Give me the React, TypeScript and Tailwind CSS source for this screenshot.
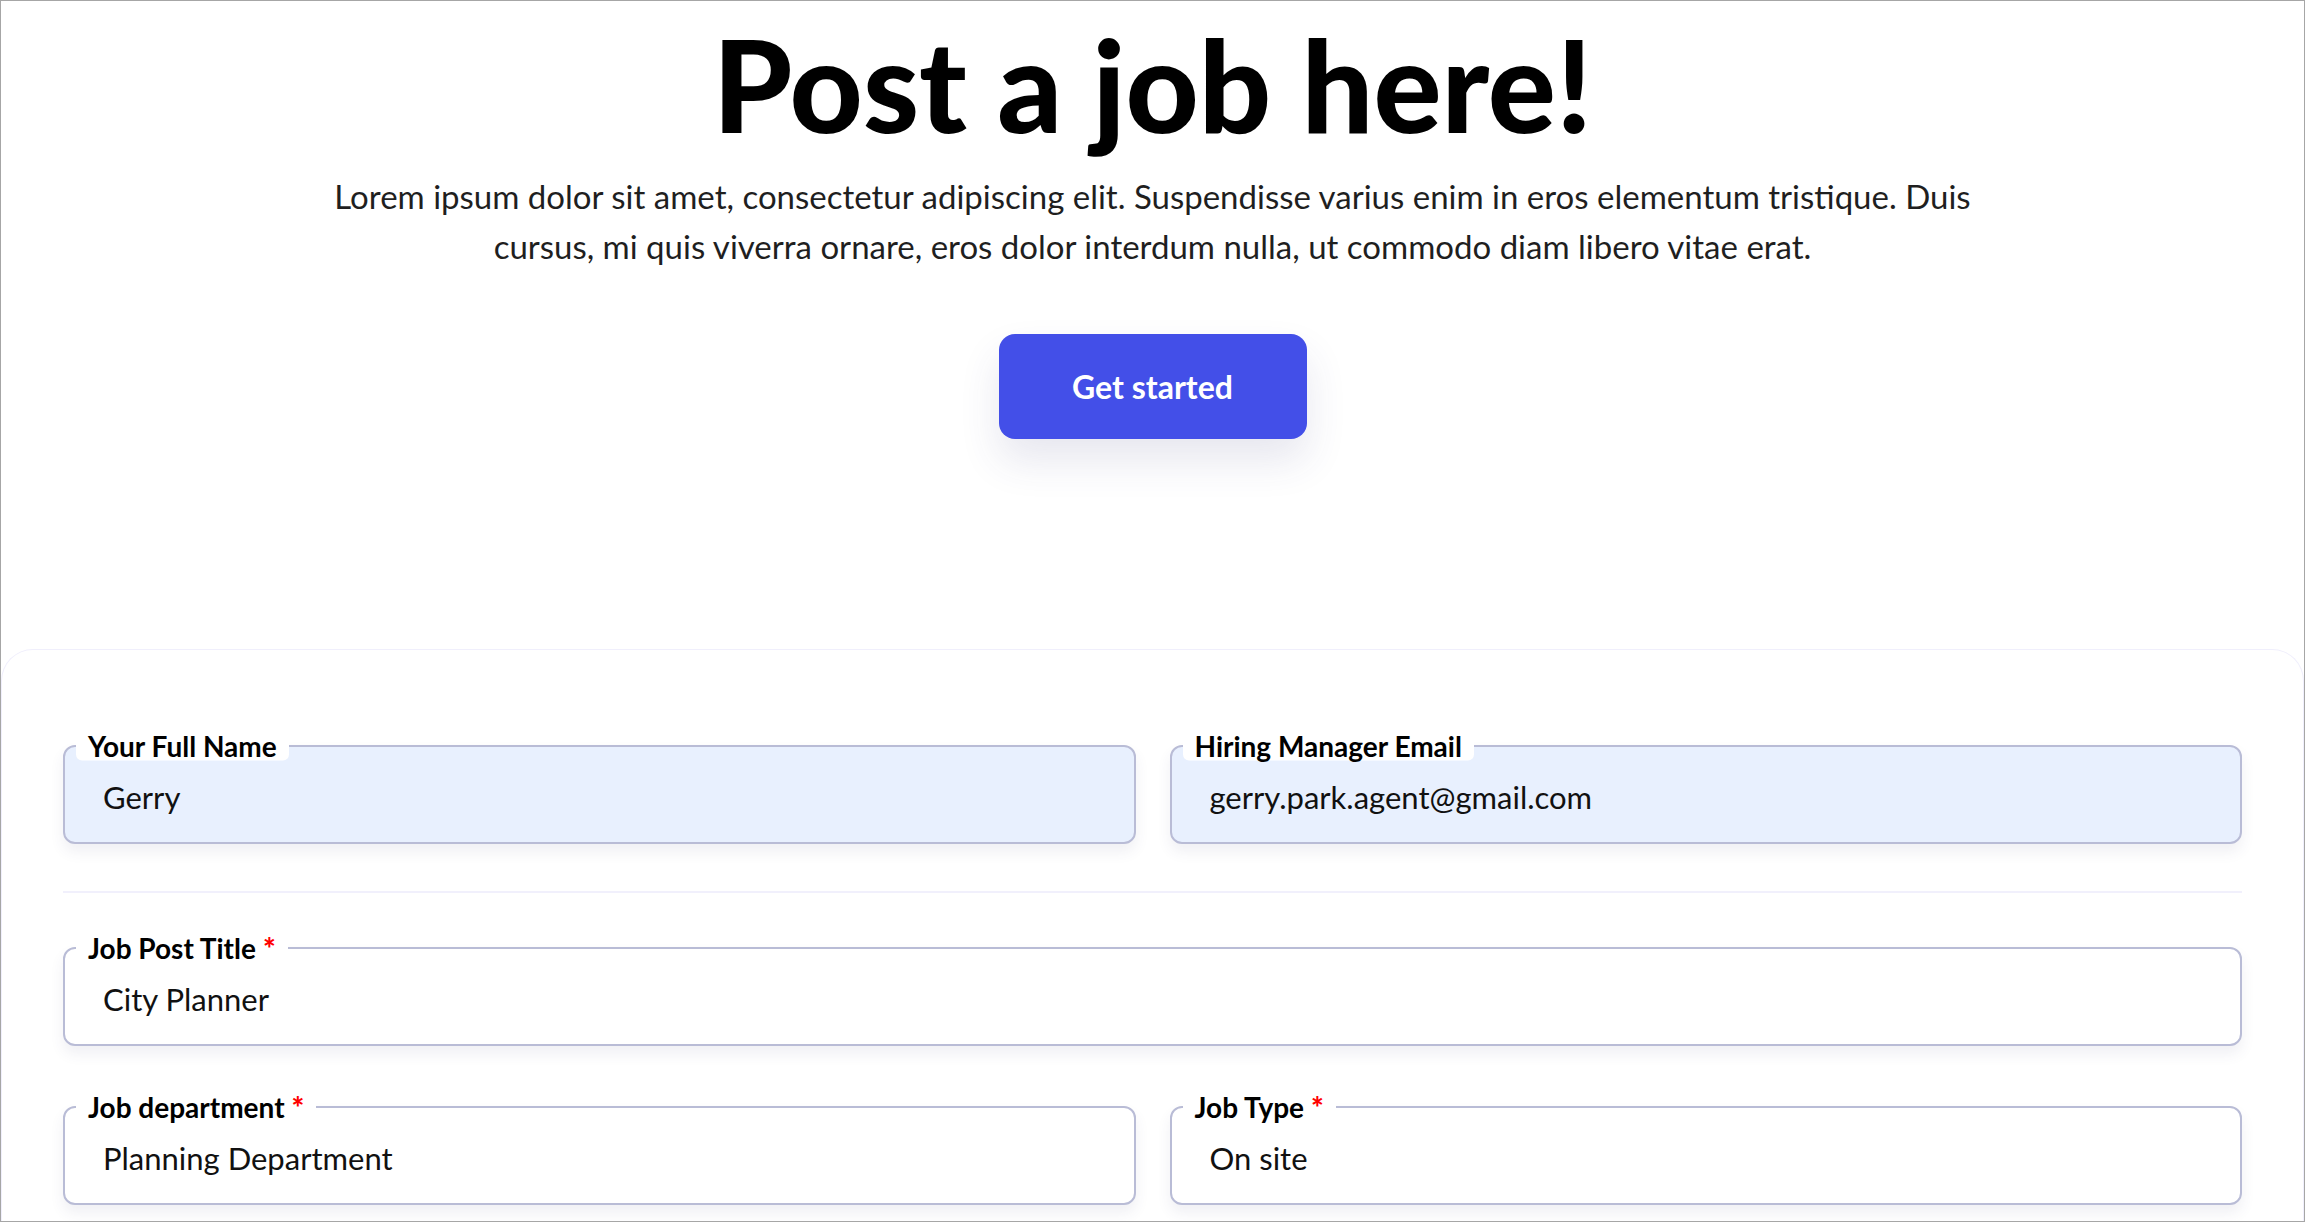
type FieldProps = {
  label: string;
  value: string;
  required?: boolean;
  filled?: boolean;
};

function Field({ label, value, required, filled }: FieldProps) {
  return (
    <div
      className={`relative flex h-[99px] items-center rounded-[12px] border-2 border-[#b9bcd6] pl-[38px] pt-[6px] text-[31px] text-[#111] shadow-[0_8px_14px_rgba(70,70,110,0.08)] ${
        filled ? "bg-[#e8f0fe]" : "bg-white"
      }`}
    >
      <span className="absolute left-[11px] top-0 -translate-y-[55%] rounded-[6px] bg-white px-[12px] text-[28px] font-bold leading-[30px] text-black">
        {label}
        {required && <span className="relative top-[1px] ml-[7px] text-[30px] font-black text-[#ff0000]">*</span>}
      </span>
      {value}
    </div>
  );
}

export default function App() {
  return (
    <div className="bg-white font-['Lato','Noto_Sans',sans-serif]">
      <div className="flex h-[1222px] flex-col overflow-hidden border border-[#a6a6a6]">
        <div className="flex flex-col items-center text-center">
          <h1 className="mt-[18px] text-[127px] font-black leading-[130px] text-black">
            Post a job here!
          </h1>
          <p className="mt-[22px] max-w-[1660px] text-[33px] leading-[50px] text-[#1f1f1f]">
            Lorem ipsum dolor sit amet, consectetur adipiscing elit. Suspendisse varius enim in eros elementum tristique. Duis
            cursus, mi quis viverra ornare, eros dolor interdum nulla, ut commodo diam libero vitae erat.
          </p>
          <button className="mt-[63px] h-[105px] w-[308px] rounded-[16px] bg-[#434fe8] text-[32px] font-bold text-white shadow-[0_22px_40px_rgba(60,60,120,0.12)]">
            Get started
          </button>
        </div>

        <div className="mt-auto h-[572px] rounded-t-[32px] border border-b-0 border-[#f0effc] px-[61px] pt-[95px]">
          <div className="grid grid-cols-2 gap-x-[34px]">
            <Field label="Your Full Name" value="Gerry" filled />
            <Field label="Hiring Manager Email" value="gerry.park.agent@gmail.com" filled />
          </div>
          <div className="mt-[47px] h-[2px] bg-[#f1f0fc]" />
          <div className="mt-[54px]">
            <Field label="Job Post Title" value="City Planner" required />
          </div>
          <div className="mt-[60px] grid grid-cols-2 gap-x-[34px]">
            <Field label="Job department" value="Planning Department" required />
            <Field label="Job Type" value="On site" required />
          </div>
        </div>
      </div>
    </div>
  );
}
